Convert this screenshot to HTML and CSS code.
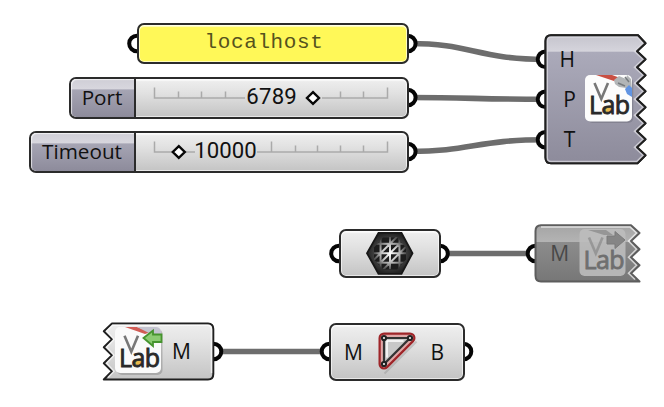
FILE: index.html
```html
<!DOCTYPE html>
<html lang="en">
<head>
<meta charset="utf-8">
<title>Component graph</title>
<link rel="stylesheet" href="styles.css">
</head>
<body>
<main class="canvas">
  <svg class="wires" width="664" height="407">
    <g class="wire">
      <path d="M410 43.5C470 43.5 478 59.3 545 59.3"/>
      <path d="M410 97.5C470 97.5 478 99.3 545 99.3"/>
      <path d="M410 151.5C470 151.5 478 139.7 545 139.7"/>
      <path d="M440 253.5H535M213 351.5H330"/>
    </g>
    <g class="port">
      <circle cx="137" cy="43.5" r="7.8"/><circle cx="407.8" cy="43.5" r="7.8"/>
      <circle cx="407.8" cy="97.5" r="7.8"/><circle cx="407.8" cy="151.5" r="7.8"/>
      <circle cx="545.5" cy="59.3" r="7.8"/><circle cx="545.5" cy="99.3" r="7.8"/><circle cx="545.5" cy="139.7" r="7.8"/>
      <circle cx="339" cy="253.5" r="7.8"/><circle cx="440" cy="253.5" r="7.8"/><circle cx="535.5" cy="253.5" r="7.8"/>
      <circle cx="213.5" cy="351.5" r="7.8"/><circle cx="329.5" cy="351.5" r="7.8"/><circle cx="463.5" cy="351.5" r="7.8"/>
    </g>
  </svg>

  <section class="node panel"><span>localhost</span></section>

  <section class="node slider slider-port">
    <div class="name">Port</div>
    <div class="track">
      <svg width="271" height="38" viewBox="136 78.5 271 38">
        <path class="rail" d="M154.5 87V97.5H245M322 97.5H387.5V87M178.5 91V97M201.5 91V97M225.5 91V97M340.5 91V97M363.5 91V97"/>
        <path class="grip" d="M313 91.6L319 97.5L313 103.4L307 97.5Z"/>
        <text class="value" x="246.3" y="103.8" textLength="50.5">6789</text>
      </svg>
    </div>
  </section>

  <section class="node slider slider-timeout">
    <div class="name">Timeout</div>
    <div class="track">
      <svg width="271" height="38" viewBox="136 132.5 271 38">
        <path class="rail" d="M154.5 141V151.5H172M185 151.5H195M257 151.5H387.5V141M271.5 141V151M295.5 145V151M317.5 145V151M340.5 145V151M363.5 145V151"/>
        <path class="grip" d="M178.8 145.6L184.8 151.5L178.8 157.4L172.8 151.5Z"/>
        <text class="value" x="194.3" y="157.8" textLength="62.5">10000</text>
      </svg>
    </div>
  </section>

  <svg class="torn connect" width="108" height="136" viewBox="541 32 108 136">
    <defs>
      <linearGradient id="mauve" x2="0" y2="1">
        <stop offset="0" stop-color="#c5c4cd"/><stop offset=".125" stop-color="#d5d4dc"/><stop offset=".13" stop-color="#abaaba"/><stop offset="1" stop-color="#8d8b9b"/>
      </linearGradient>
      <clipPath id="connect-clip"><path d="M551 35.3H638L645.5 43.3L637 51.3L645.5 59.3L637 67.3L645.5 75.3L637 83.3L645.5 91.3L637 99.3L645.5 107.3L637 115.3L645.5 123.3L637 131.3L645.5 139.3L637 147.3L645.5 155.3L637.5 163.3H551Q545.5 163.3 545.5 157.5V41Q545.5 35.3 551 35.3Z"/></clipPath>
      <g id="lab">
        <path class="lab-v" d="M9 8.5L15.8 24.5L22.5 8.5"/>
        <text class="lab-word" x="3.6" y="39.8" textLength="41">Lab</text>
      </g>
      <ellipse id="drop" class="lab-drop" cx="22.3" cy="35" rx="3.3" ry="2.9"/>
    </defs>
    <path class="edge" fill="url(#mauve)" d="M551 35.3H638L645.5 43.3L637 51.3L645.5 59.3L637 67.3L645.5 75.3L637 83.3L645.5 91.3L637 99.3L645.5 107.3L637 115.3L645.5 123.3L637 131.3L645.5 139.3L637 147.3L645.5 155.3L637.5 163.3H551Q545.5 163.3 545.5 157.5V41Q545.5 35.3 551 35.3Z"/>
    <path class="gleam" clip-path="url(#connect-clip)" d="M551 35.3H638L645.5 43.3L637 51.3L645.5 59.3L637 67.3L645.5 75.3L637 83.3L645.5 91.3L637 99.3L645.5 107.3L637 115.3L645.5 123.3L637 131.3L645.5 139.3L637 147.3L645.5 155.3L637.5 163.3H551Q545.5 163.3 545.5 157.5V41Q545.5 35.3 551 35.3Z"/>
    <path class="edge" fill="none" d="M551 35.3H638L645.5 43.3L637 51.3L645.5 59.3L637 67.3L645.5 75.3L637 83.3L645.5 91.3L637 99.3L645.5 107.3L637 115.3L645.5 123.3L637 131.3L645.5 139.3L637 147.3L645.5 155.3L637.5 163.3H551Q545.5 163.3 545.5 157.5V41Q545.5 35.3 551 35.3Z"/>
    <text class="label" x="559.5" y="66.7">H</text>
    <text class="label" x="563.3" y="107">P</text>
    <text class="label" x="563.8" y="147.2">T</text>
    <rect x="587.3" y="77.5" width="46" height="45.5" rx="5" fill="#656371" opacity=".4"/>
    <rect x="585" y="75" width="47" height="46.5" rx="5" fill="#fcfcfc"/>
    <path d="M596 75L612 75L623 79L617 82Z" fill="#c94f43"/>
    <path d="M614 80L619 76L626 79L627 75L631 79L632 89L626 88L619 87L615 84Z" fill="#b2b5b7"/>
    <path d="M618 83L625 86M625 77L629 82" fill="none" stroke="#777b7e" stroke-width="1.5"/>
    <path d="M625 89L629 85L632 88V97L627 94Z" fill="#6194e2"/>
    <use href="#drop" x="585.5" y="74.5"/>
    <use href="#lab" x="585.5" y="74.5"/>
  </svg>

  <section class="node mesh">
    <svg width="50" height="46" viewBox="364 230.5 50 46">
      <defs>
        <radialGradient id="coal"><stop offset="0" stop-color="#777"/><stop offset=".6" stop-color="#484848"/><stop offset="1" stop-color="#222"/></radialGradient>
        <radialGradient id="glow" gradientUnits="userSpaceOnUse" cx="389" cy="253.7" r="20"><stop offset="0" stop-color="#fff"/><stop offset=".45" stop-color="#bdbdbd"/><stop offset=".75" stop-color="#5c5c5c"/><stop offset="1" stop-color="#3a3a3a"/></radialGradient>
      </defs>
      <path d="M377.5 233.3H400.5L411.5 253.7L400.5 274.3H377.5L366 253.7Z" fill="url(#coal)" stroke="#171717" stroke-width="1.8"/>
      <path d="M382 238H396L405 248V260L396 270H382L373 260V248Z" fill="#1c1c1c"/>
      <path d="M379.5 239V268.5M389 237V270M398.5 239V268.5M374 244.2H404M373 253.7H405M374 263.2H404M379.5 253.7L398.5 234.7M379.5 263.2L398.5 244.2M379.5 272.7L398.5 253.7M370 263.2L379.5 253.7M398.5 253.7L408 244.2" clip-path="url(#mesh-clip)" fill="none" stroke="url(#glow)" stroke-width="2"/>
      <clipPath id="mesh-clip"><path d="M382 237.5H396L405 248V260L396 270H382L373 260V248Z"/></clipPath>
    </svg>
  </section>

  <svg class="torn send" width="112" height="64" viewBox="531 221 112 64">
    <defs><linearGradient id="off" x2="0" y2="1"><stop offset="0" stop-color="#a5a5a5"/><stop offset=".29" stop-color="#b3b3b3"/><stop offset=".3" stop-color="#8c8c8c"/><stop offset="1" stop-color="#777"/></linearGradient></defs>
    <path class="edge off" fill="url(#off)" d="M541 225.3H631L639.5 233L631 241L639.5 249.2L631 257.3L639.5 265.3L631 273.3L639.5 281.5H541Q535.5 281.5 535.5 275.5V231Q535.5 225.3 541 225.3Z"/>
    <path class="gleam-line" d="M541 227H630L636.5 233L628.5 241L636.5 249.2L628.5 257.3L636.5 265.3L628.5 273.3L635 279.5"/>
    <text class="label off-text" x="550.3" y="260.8">M</text>
    <rect x="579.5" y="229" width="46" height="47" rx="5" fill="#bcbcbc" opacity=".9"/>
    <path d="M588 230H606L613 235H604Z" fill="#969696"/>
    <path d="M607 236H615V231.5L625 240L615 248.5V244H607Z" fill="#858585" stroke="#7b7b7b"/>
    <g opacity=".5"><use href="#lab" x="580" y="229"/></g>
  </svg>

  <svg class="torn receive" width="118" height="64" viewBox="99 319 118 64">
    <defs><linearGradient id="silver" x2="0" y2="1"><stop offset="0" stop-color="#eee"/><stop offset=".25" stop-color="#e6e6e6"/><stop offset="1" stop-color="#c4c4c4"/></linearGradient></defs>
    <path class="edge" fill="url(#silver)" d="M112 323.5H208Q213.3 323.5 213.3 329V374Q213.3 379.5 208 379.5H103.8L112 371.3L103.8 363.3L112 355.3L103.8 347.3L112 339.3L103.8 331.3Z"/>
    <path class="gleam-line" d="M106.5 331.3L112.5 325.3H207Q211.5 325.3 211.5 330V373M106.5 331.3L114 339.3L106.5 347.3L114 355.3L106.5 363.3L114 371.3L108 377.5"/>
    <rect x="117" y="329" width="45.5" height="46" rx="5" fill="#777" opacity=".4"/>
    <rect x="115" y="327" width="46" height="46" rx="5" fill="#fafafa"/>
    <path d="M125 327L137 327L151 332L145 334Z" fill="#d15c55"/>
    <path d="M137 327H156Q160 327 161 331V340L147 332Z" fill="#c4c4d0"/>
    <path d="M143.5 338L153 330.5V334.5H161.5V342H153V346Z" fill="#8ccb72" stroke="#46942e" stroke-width="1.8"/>
    <use href="#drop" x="115.5" y="327.2"/>
    <use href="#lab" x="115.5" y="327.2"/>
    <text class="label" x="172" y="359">M</text>
  </svg>

  <section class="node brep">
    <svg width="132" height="54" viewBox="330.5 324.5 132 54">
      <path d="M384 373L416 341" stroke="#888" stroke-width="2" opacity=".35"/>
      <path d="M383.5 337.5H409.5L383.5 363.5Z" fill="#ccc" stroke="#9e2529" stroke-width="11" stroke-linejoin="round"/>
      <path d="M383.5 337.5H409.5L383.5 363.5Z" fill="#c4c4c4" stroke="#e0a8a8" stroke-width="6.5" stroke-linejoin="round"/>
      <path d="M383.5 337.5H409.5L383.5 363.5Z" fill="#c8c8c8" stroke="#333" stroke-width="2.2"/>
      <path d="M386.5 357V340.5H403" fill="none" stroke="#fff" stroke-width="1.5"/>
      <g fill="#eee" stroke="#222" stroke-width="2"><circle cx="383.5" cy="337.5" r="2.1"/><circle cx="409.5" cy="337.5" r="2.1"/><circle cx="383.5" cy="363.5" r="2.1"/></g>
      <text class="label" x="343.5" y="359">M</text>
      <text class="label" x="430" y="359">B</text>
    </svg>
  </section>
</main>
</body>
</html>
```
FILE: styles.css
```css
* { box-sizing: border-box; }
body { margin: 0; background: #fff; }
.canvas {
  position: relative;
  width: 664px;
  height: 407px;
  overflow: hidden;
  color: #111;
  font: 20.7px "Open Sans", sans-serif;
}
.wires, .node, .torn { position: absolute; }
.wires { left: 0; top: 0; }
.wire { fill: none; stroke: #6d6d6d; stroke-width: 5.6; }
.port { fill: #fff; stroke: #050505; stroke-width: 4; }

.node {
  display: flex;
  align-items: center;
  border: 2px solid #2b2b2b;
  border-radius: 7px;
  background: linear-gradient(#efefef, #e2e2e2 35%, #c4c4c4);
  box-shadow: inset 0 0 0 1px rgba(255, 255, 255, .6), inset 0 2px 1px rgba(255, 255, 255, .6);
}
.panel {
  left: 136.5px; top: 22.5px; width: 272px; height: 41.5px;
  justify-content: center;
  background: #fff858;
  color: #55521d;
  font: 21px "Liberation Mono", monospace;
  letter-spacing: .6px;
  padding: 0 17px 2px 0;
}
.slider { height: 42px; overflow: hidden; }
.slider-port { left: 68.5px; top: 76.5px; width: 340px; }
.slider-timeout { left: 28.5px; top: 130.5px; width: 380px; }
.name {
  flex: 1;
  align-self: stretch;
  display: flex;
  align-items: center;
  justify-content: center;
  border-right: 2px solid #2b2b2b;
  border-radius: 5px 0 0 5px;
  background: linear-gradient(#cfced6, #d8d7de 27%, #a6a5b4 28%, #8d8b9b);
  box-shadow: inset 1px 1px 1px rgba(255, 255, 255, .7);
  padding-bottom: 2px;
}
.track { width: 271px; height: 38px; }
.track svg, .node > svg { display: block; flex: none; }
.rail { fill: none; stroke: #aaa; stroke-width: 1.5; }
.grip { fill: #fff; stroke: #080808; stroke-width: 2.4; }
.value { font: 22.2px Roboto, sans-serif; fill: #111; }

.edge { stroke: #202020; stroke-width: 2; stroke-linejoin: round; }
.edge.off { stroke: #5d5d5d; }
.gleam { fill: none; stroke: #dddce3; stroke-width: 5; opacity: .75; }
.gleam-line { fill: none; stroke: #fff; stroke-width: 1.5; opacity: .65; }
.label { font: 21px "Open Sans", sans-serif; fill: #111; }
.off-text { fill: #484848; }
.lab-v { fill: none; stroke: #777; stroke-width: 2.6; }
.lab-word { font: 25px "Open Sans", sans-serif; fill: #292929; stroke: #292929; stroke-width: .9; }
.lab-drop { fill: #e9b84c; }
.connect { left: 541px; top: 32px; }
.send { left: 531px; top: 221px; }
.receive { left: 99px; top: 319px; }
.mesh { left: 338.5px; top: 228.5px; width: 102px; height: 49.5px; justify-content: center; }
.brep { left: 328.5px; top: 322.5px; width: 136px; height: 58px; }
```
